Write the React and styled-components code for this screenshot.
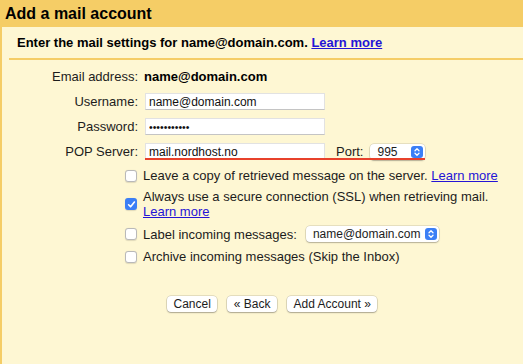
import styled, { createGlobalStyle } from "styled-components";

const GlobalStyle = createGlobalStyle`
  html, body {
    margin: 0;
    padding: 0;
    background: #fef7d3;
  }
  body {
    font-family: "Liberation Sans", Arial, Helvetica, sans-serif;
    color: #1c1c1c;
  }
`;

const Page = styled.div`
  width: 523px;
  height: 364px;
  background: #fef7d3;
  overflow: hidden;
`;

const Header = styled.h1`
  margin: 0;
  height: 27px;
  line-height: 27px;
  padding-left: 5px;
  background: #f5cd66;
  font-size: 16px;
  font-weight: bold;
  color: #000;
`;

const Body = styled.div`
  border-left: 2px solid #f5cd66;
  height: 337px;
`;

const Intro = styled.p`
  margin: 0;
  padding: 8px 0 0 15px;
  line-height: 15px;
  font-size: 13px;
  font-weight: bold;
  color: #000;
`;

const Divider = styled.hr`
  margin: 8px 0 0 7px;
  border: 0;
  border-top: 2px solid #f5cd66;
  height: 0;
`;

const Link = styled.a`
  color: #2414d6;
  text-decoration: underline;
  cursor: pointer;
`;

const FormGrid = styled.div`
  display: grid;
  grid-template-columns: 136px auto;
  column-gap: 6px;
  row-gap: 8px;
  margin-top: 8px;
  align-items: center;
  font-size: 13px;
`;

const Label = styled.label`
  text-align: right;
  line-height: 17px;
  color: #1c1c1c;
`;

const Value = styled.span`
  font-weight: bold;
  color: #000;
  line-height: 17px;
`;

const TextInput = styled.input`
  box-sizing: border-box;
  width: 180px;
  height: 17px;
  margin: 0 0 0 1px;
  padding: 0 3px;
  border: 1px solid #e2e2e2;
  border-bottom-color: #c4c4c4;
  background: #fff;
  font-family: "Liberation Sans", Arial, sans-serif;
  font-size: ${(p) => (p.type === "password" ? 10.5 : 12)}px;
  color: #111;
  outline: none;
`;

const ServerRow = styled.div`
  position: relative;
  display: flex;
  align-items: center;
  width: max-content;

  &::after {
    content: "";
    position: absolute;
    left: 1px;
    right: 0;
    bottom: 0;
    height: 2px;
    background: #e8412b;
  }
`;

const PortLabel = styled.span`
  margin: 0 7px 0 11px;
  color: #1c1c1c;
`;

const SelectBox = styled.div`
  display: flex;
  align-items: center;
  justify-content: space-between;
  box-sizing: border-box;
  width: ${(p) => p.width}px;
  height: 16px;
  padding: 0 2px 0 7px;
  background: #fff;
  border-radius: 4px;
  box-shadow: 0 0 0 0.5px rgba(0, 0, 0, 0.18), 0 1px 1.5px rgba(0, 0, 0, 0.22);
  font-size: 12px;
  color: #1c1c1c;
`;

const ArrowButton = styled.span`
  display: flex;
  align-items: center;
  justify-content: center;
  width: 12px;
  height: 12px;
  border-radius: 3px;
  background: #3b7ff6;
`;

const CheckList = styled.div`
  display: flex;
  flex-direction: column;
  gap: 6px;
  margin-top: 8px;
  padding-left: 123px;
  font-size: 13px;
`;

const CheckRow = styled.div`
  display: flex;
  align-items: center;
  gap: 6px;
  min-height: ${(p) => (p.tall ? 18 : 15)}px;
  line-height: 15px;
`;

const Box = styled.span`
  flex: none;
  display: flex;
  align-items: center;
  justify-content: center;
  box-sizing: border-box;
  width: 12px;
  height: 12px;
  border-radius: 3px;
  background: ${(p) => (p.checked ? "#3b7ff6" : "#fff")};
  border: ${(p) => (p.checked ? "none" : "1px solid #b9b9b9")};
  box-shadow: 0 0.5px 1px rgba(0, 0, 0, 0.12);
`;

const CheckText = styled.span`
  color: #1c1c1c;
`;

const InlineSelect = styled.span`
  margin-left: 3px;
`;

const Buttons = styled.div`
  display: flex;
  gap: 10px;
  margin-top: 32px;
  padding-left: 165px;
`;

const Button = styled.button`
  height: 16px;
  padding: 0 6.5px;
  border: none;
  border-radius: 4px;
  background: #fff;
  box-shadow: 0 0 0 0.5px rgba(0, 0, 0, 0.2), 0 1px 1.5px rgba(0, 0, 0, 0.25);
  font-family: "Liberation Sans", Arial, sans-serif;
  font-size: 12px;
  line-height: 16px;
  color: #1c1c1c;
`;

function Arrows() {
  return (
    <ArrowButton>
      <svg width="8" height="10" viewBox="0 0 8 10" fill="none">
        <path d="M2 3.8 L4 1.8 L6 3.8" stroke="#fff" strokeWidth="1.3" strokeLinecap="round" strokeLinejoin="round" />
        <path d="M2 6.2 L4 8.2 L6 6.2" stroke="#fff" strokeWidth="1.3" strokeLinecap="round" strokeLinejoin="round" />
      </svg>
    </ArrowButton>
  );
}

function Select({ value, width }) {
  return (
    <SelectBox width={width}>
      <span>{value}</span>
      <Arrows />
    </SelectBox>
  );
}

function Checkbox({ checked }) {
  return (
    <Box checked={checked}>
      {checked && (
        <svg width="9" height="9" viewBox="0 0 9 9" fill="none">
          <path d="M1.6 4.8 L3.6 6.8 L7.4 2" stroke="#fff" strokeWidth="1.6" strokeLinecap="round" strokeLinejoin="round" />
        </svg>
      )}
    </Box>
  );
}

export default function App() {
  return (
    <>
      <GlobalStyle />
      <Page>
        <Header>Add a mail account</Header>
        <Body>
          <Intro>
            Enter the mail settings for name@domain.com. <Link>Learn more</Link>
          </Intro>
          <Divider />

          <FormGrid>
            <Label>Email address:</Label>
            <Value>name@domain.com</Value>

            <Label>Username:</Label>
            <div>
              <TextInput readOnly value="name@domain.com" />
            </div>

            <Label>Password:</Label>
            <div>
              <TextInput readOnly type="password" value="abcdefghijk" />
            </div>

            <Label>POP Server:</Label>
            <div>
              <ServerRow>
                <TextInput readOnly value="mail.nordhost.no" />
                <PortLabel>Port:</PortLabel>
                <Select value="995" width={55} />
              </ServerRow>
            </div>
          </FormGrid>

          <CheckList>
            <CheckRow>
              <Checkbox />
              <CheckText>
                Leave a copy of retrieved message on the server. <Link>Learn more</Link>
              </CheckText>
            </CheckRow>
            <CheckRow>
              <Checkbox checked />
              <CheckText>
                Always use a secure connection (SSL) when retrieving mail.
                <br />
                <Link>Learn more</Link>
              </CheckText>
            </CheckRow>
            <CheckRow tall>
              <Checkbox />
              <CheckText>Label incoming messages:</CheckText>
              <InlineSelect>
                <Select value="name@domain.com" width={133} />
              </InlineSelect>
            </CheckRow>
            <CheckRow>
              <Checkbox />
              <CheckText>Archive incoming messages (Skip the Inbox)</CheckText>
            </CheckRow>
          </CheckList>

          <Buttons>
            <Button>Cancel</Button>
            <Button>« Back</Button>
            <Button>Add Account »</Button>
          </Buttons>
        </Body>
      </Page>
    </>
  );
}
